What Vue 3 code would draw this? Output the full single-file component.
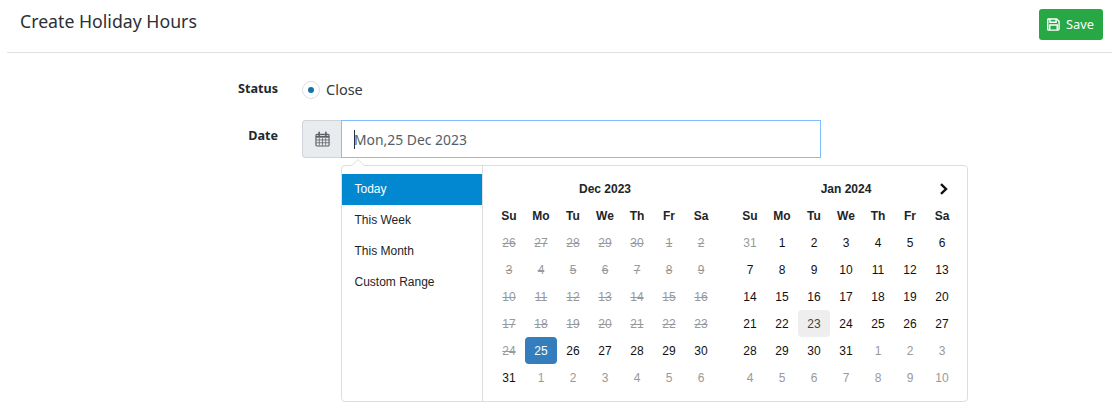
<template>
  <div class="page">
    <header class="page__header">
      <h1 class="page__title">Create Holiday Hours</h1>
      <button class="save-btn" type="button">
        <svg class="save-btn__icon" viewBox="0 0 14 14" width="13" height="13">
          <path d="M1.4 1h9l2.6 2.6v8.2a1.2 1.2 0 0 1-1.2 1.2H1.4A1.2 1.2 0 0 1 .8 11.8V2a1 1 0 0 1 .6-1z" fill="none" stroke="currentColor" stroke-width="1.5"/>
          <path d="M3.2 1v3.6h6.6V1" fill="none" stroke="currentColor" stroke-width="1.5"/>
          <path d="M3 13V7.6h8V13" fill="none" stroke="currentColor" stroke-width="1.5"/>
        </svg>
        Save
      </button>
    </header>

    <div class="form">
      <div class="form__row form__row--status">
        <label class="form__label">Status</label>
        <div class="radio">
          <span class="radio__circle"><span class="radio__dot"></span></span>
          <span class="radio__text">Close</span>
        </div>
      </div>

      <div class="form__row">
        <label class="form__label form__label--date">Date</label>
        <div class="input-group">
          <span class="input-group__addon">
            <svg viewBox="0 0 16 16" width="15" height="16">
              <rect x="1" y="3" width="14" height="12.4" rx="1" fill="none" stroke="#5b5f63" stroke-width="1.2"/>
              <path d="M1 5.6h14" stroke="#5b5f63" stroke-width="2"/>
              <path d="M4.6 7v8M8 7v8M11.4 7v8M1 9h14M1 12h14" stroke="#5b5f63" stroke-width=".8"/>
              <path d="M4.4 .8v3.4M11.6 .8v3.4" stroke="#5b5f63" stroke-width="1.7" stroke-linecap="round"/>
            </svg>
          </span>
          <div class="input-group__input"><span class="caret-bar"></span>Mon,25 Dec 2023</div>

          <div class="picker">
            <ul class="ranges">
              <li v-for="(r, i) in ranges" :key="r" class="ranges__item" :class="{ 'ranges__item--active': i === 0 }">{{ r }}</li>
            </ul>
            <div class="calendars">
              <div v-for="cal in calendars" :key="cal.title" class="cal">
                <div class="cal__title">{{ cal.title }}</div>
                <svg v-if="cal.next" class="cal__next" viewBox="0 0 10 12" width="10" height="12">
                  <path d="M2 1.2 7 6l-5 4.8" fill="none" stroke="#111" stroke-width="2.4"/>
                </svg>
                <div v-for="d in days" :key="d" class="cal__dow">{{ d }}</div>
                <div
                  v-for="(c, i) in cal.cells"
                  :key="i"
                  class="cal__cell"
                  :class="'cal__cell--' + c.kind"
                >{{ c.n }}</div>
              </div>
            </div>
          </div>
        </div>
      </div>
    </div>
  </div>
</template>

<script setup>
const ranges = ['Today', 'This Week', 'This Month', 'Custom Range']
const days = ['Su', 'Mo', 'Tu', 'We', 'Th', 'Fr', 'Sa']

function seq(from, to, kind) {
  const out = []
  for (let n = from; n <= to; n++) out.push({ n, kind })
  return out
}

const decCells = [
  ...seq(26, 30, 'past'),
  ...seq(1, 24, 'past'),
  { n: 25, kind: 'active' },
  ...seq(26, 31, 'normal'),
  ...seq(1, 6, 'off'),
]

const janCells = [
  { n: 31, kind: 'off' },
  ...seq(1, 22, 'normal'),
  { n: 23, kind: 'today' },
  ...seq(24, 31, 'normal'),
  ...seq(1, 10, 'off'),
]

const calendars = [
  { title: 'Dec 2023', cells: decCells, next: false },
  { title: 'Jan 2024', cells: janCells, next: true },
]
</script>

<style>
html, body { background: #fff; }
</style>

<style scoped>
.page { width: 1112px; height: 416px; overflow: hidden; font-family: "Noto Sans", "Open Sans", sans-serif; color: #212529; }
.page__header { display: flex; justify-content: space-between; align-items: flex-start; box-sizing: border-box; height: 53px; margin-left: 7px; padding: 9px 9px 0 13px; border-bottom: 1px solid #dee2e6; }
.page__title { margin: 0; font-size: 17.7px; font-weight: 400; line-height: 25px; color: #2b3035; }
.save-btn { display: flex; align-items: center; gap: 6px; width: 64px; height: 31px; padding: 0 0 1px 8px; background: #28a745; border: 0; border-radius: 3px; color: #fff; font: 400 12.8px "Noto Sans", sans-serif; }
.save-btn__icon { flex: none; }

.form { padding-top: 27px; }
.form__row { display: flex; }
.form__row--status { height: 40px; align-items: flex-start; }
.form__label { width: 278px; text-align: right; font-size: 12.6px; font-weight: 700; line-height: 18px; color: #23282c; }
.form__label--date { margin-top: 7px; }

.radio { display: flex; align-items: center; gap: 6px; margin-left: 24px; height: 18px; }
.radio__circle { display: flex; align-items: center; justify-content: center; width: 18px; height: 18px; margin-top: 2px; box-sizing: border-box; border: 1px solid #dcdfe3; border-radius: 50%; }
.radio__dot { width: 6px; height: 6px; border-radius: 50%; background: #0f75a8; }
.radio__text { font-size: 14.5px; color: #343a40; }

.input-group { position: relative; display: flex; margin-left: 24px; width: 519px; height: 38px; }
.input-group__addon { display: flex; align-items: center; justify-content: center; width: 39px; box-sizing: border-box; background: #e9ecef; border: 1px solid #ced4da; border-right: 0; border-radius: 4px 0 0 4px; }
.input-group__input { flex: 1; display: flex; align-items: center; padding-left: 12px; border: 1px solid #80bdff; font-size: 13.9px; color: #555d65; }
.caret-bar { width: 1px; height: 19px; background: #2a2f38; margin-right: -1px; }

.picker { position: absolute; top: 45px; left: 39px; display: flex; width: 627px; height: 237px; box-sizing: border-box; background: #fff; border: 1px solid #ddd; border-radius: 4px; font-family: "Liberation Sans", Arial, sans-serif; font-size: 12px; color: #212529; }
.picker::before { content: ""; position: absolute; top: -7px; left: 9px; border: solid transparent; border-width: 0 7px 7px; border-bottom-color: #ddd; }
.picker::after { content: ""; position: absolute; top: -6px; left: 10px; border: solid transparent; border-width: 0 6px 6px; border-bottom-color: #fff; }

.ranges { flex: none; width: 140px; margin: 0; padding: 8px 0 0; list-style: none; border-right: 1px solid #ddd; }
.ranges__item { height: 31px; padding-left: 12.5px; line-height: 31px; color: #212529; }
.ranges__item--active { background: #0288d1; color: #fff; }

.calendars { display: flex; gap: 17px; padding: 9px 0 0 10px; }
.cal { position: relative; display: grid; grid-template-columns: repeat(7, 32px); grid-auto-rows: 27px; }
.cal__title { grid-column: 1 / -1; text-align: center; font-weight: 700; line-height: 29px; color: #212529; }
.cal__next { position: absolute; top: 8px; right: 9px; }
.cal__dow { text-align: center; font-weight: 700; line-height: 29px; }
.cal__cell { text-align: center; line-height: 29px; border-radius: 4px; color: #111; }
.cal__cell--past { color: #999; text-decoration: line-through; }
.cal__cell--off { color: #999; }
.cal__cell--active { background: #357ebd; color: #fff; }
.cal__cell--today { background: #eee; color: #444; }
</style>
